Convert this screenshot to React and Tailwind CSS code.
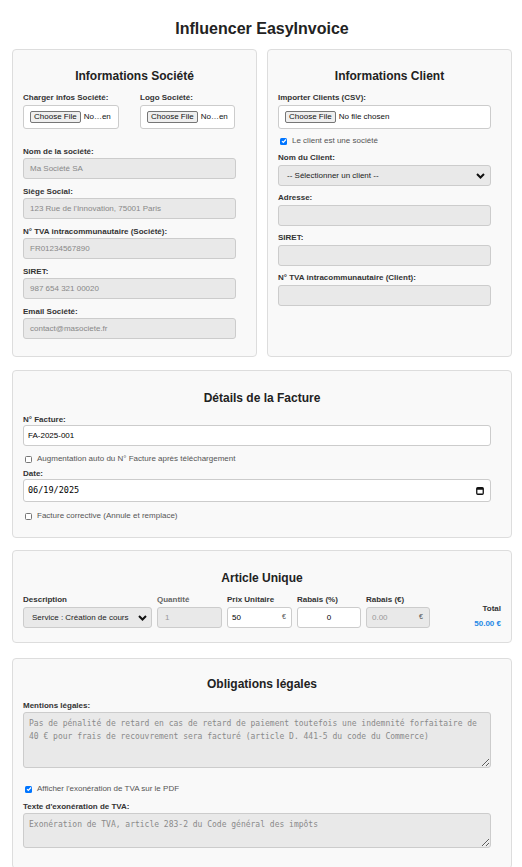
import React from 'react';

const Label = ({ children, className = 'mb-[1px]' }) => (
    <div className={`text-[8px] font-bold leading-[10px] text-[#333] ${className}`}>{children}</div>
);

const Field = ({ label, value, className = 'mb-[8px]', labelClass }) => (
    <div>
        <Label className={labelClass}>{label}</Label>
        <div className={`w-[calc(100%-10px)] h-[21px] border border-[#ccc] rounded-[3px] bg-[#e9e9e9] flex items-center px-[6px] text-[8px] text-[#888] ${className}`}>
            {value}
        </div>
    </div>
);

const Chevron = () => (
    <svg width="9" height="6" viewBox="0 0 9 6" className="shrink-0">
        <path d="M1 1l3.5 3.5L8 1" fill="none" stroke="#111" strokeWidth="2" />
    </svg>
);

const Check = ({ checked }) => (
    checked ? (
        <span className="w-[7px] h-[7px] rounded-[1.5px] bg-[#0075ff] flex items-center justify-center shrink-0">
            <svg width="6" height="6" viewBox="0 0 6 6">
                <path d="M1 3.2l1.3 1.3L5 1.5" fill="none" stroke="#fff" strokeWidth="1.2" />
            </svg>
        </span>
    ) : (
        <span className="w-[7px] h-[7px] rounded-[1.5px] border border-[#767676] bg-white shrink-0" />
    )
);

const CheckRow = ({ checked, children, className = '' }) => (
    <div className={`h-[10px] flex items-center gap-[5px] pl-[2px] text-[8px] text-[#555] ${className}`}>
        <Check checked={checked} />
        <span>{children}</span>
    </div>
);

const FileBox = ({ text, className = 'w-[96px]' }) => (
    <div className={`h-[24px] border border-[#ccc] rounded-[3px] bg-white flex items-center px-[6px] text-[8px] text-[#111] ${className}`}>
        <span className="h-[12px] leading-[10px] px-[3px] border border-[#767676] rounded-[2px] bg-[#efefef]">Choose File</span>
        <span className="ml-[3px]">{text}</span>
    </div>
);

const Card = ({ title, children, className = '' }) => (
    <section className={`bg-[#f9f9f9] border border-[#ddd] rounded-[4px] px-[10px] ${className}`}>
        <h2 className="text-[12px] leading-[14px] font-bold text-center text-[#222] mb-[10px]">{title}</h2>
        {children}
    </section>
);

const Textarea = ({ value, className }) => (
    <textarea
        readOnly
        wrap="off"
        value={value}
        className={`block w-[calc(100%-10px)] border border-[#ccc] rounded-[3px] bg-[#e9e9e9] px-[5px] pt-[4px] font-['DejaVu_Sans_Mono',monospace] text-[8px] leading-[13px] text-[#8a8a8a] overflow-hidden outline-none ${className}`}
    />
);

export default function App() {
    return (
        <div className="min-h-screen bg-white pl-3 pr-[10px] pt-[19px] pb-6 font-['Liberation_Sans',Arial,sans-serif] text-[#333]">
            <h1 className="text-[16px] leading-[20px] font-bold text-center text-[#222] mb-[10px]">Influencer EasyInvoice</h1>

            {/* Société / Client */}
            <div className="grid grid-cols-2 gap-[10px]">
                <Card title="Informations Société" className="pt-[19px] pb-[9px]">
                    <div className="flex gap-[21px] mb-[18px]">
                        <div>
                            <Label className="mb-[2px]">Charger infos Société:</Label>
                            <FileBox text="No…en" />
                        </div>
                        <div>
                            <Label className="mb-[2px]">Logo Société:</Label>
                            <FileBox text="No…en" className="w-[95px]" />
                        </div>
                    </div>
                    <Field label="Nom de la société:" value="Ma Société SA" />
                    <Field label="Siège Social:" value="123 Rue de l'Innovation, 75001 Paris" />
                    <Field label="N° TVA intracommunautaire (Société):" value="FR01234567890" />
                    <Field label="SIRET:" value="987 654 321 00020" />
                    <Field label="Email Société:" value="contact@masociete.fr" />
                </Card>

                <Card title="Informations Client" className="pt-[19px]">
                    <Label className="mb-[2px]">Importer Clients (CSV):</Label>
                    <FileBox text="No file chosen" className="w-[calc(100%-10px)] mb-[7px]" />
                    <CheckRow checked className="mb-[7px]">Le client est une société</CheckRow>
                    <Label className="mb-[2px]">Nom du Client:</Label>
                    <div className="w-[calc(100%-10px)] h-[21px] border border-[#ccc] rounded-[3px] bg-[#e9e9e9] flex items-center justify-between pl-[8px] pr-[5px] text-[8px] text-[#222] mb-[7px]">
                        <span>-- Sélectionner un client --</span>
                        <Chevron />
                    </div>
                    <Field label="Adresse:" value="" labelClass="mb-[2px]" className="mb-[7px]" />
                    <Field label="SIRET:" value="" labelClass="mb-[2px]" className="mb-[7px]" />
                    <Field label="N° TVA intracommunautaire (Client):" value="" labelClass="mb-[2px]" className="mb-[7px]" />
                </Card>
            </div>

            {/* Détails */}
            <Card title="Détails de la Facture" className="mt-[13px] pt-[20px] pb-[16px]">
                <Label className="mb-0">N° Facture:</Label>
                <div className="w-[calc(100%-10px)] h-[21px] border border-[#ccc] rounded-[3px] bg-white flex items-center px-[4px] text-[8px] text-[#000] mb-[8px]">
                    FA-2025-001
                </div>
                <CheckRow className="mb-[5px]">Augmentation auto du N° Facture après téléchargement</CheckRow>
                <Label className="mb-0">Date:</Label>
                <div className="w-[calc(100%-10px)] h-[23px] border border-[#ccc] rounded-[3px] bg-white flex items-center justify-between pl-[4px] pr-[6px] mb-[9px]">
                    <span className="font-['DejaVu_Sans_Mono',monospace] text-[8.5px] text-[#000]">06/19/2025</span>
                    <svg width="8" height="8" viewBox="0 0 8 8">
                        <rect x="0.75" y="0.75" width="6.5" height="6.5" rx="1" fill="none" stroke="#111" strokeWidth="1.3" />
                        <rect x="0.75" y="0.75" width="6.5" height="2" fill="#111" />
                    </svg>
                </div>
                <CheckRow>Facture corrective (Annule et remplace)</CheckRow>
            </Card>

            {/* Article */}
            <Card title="Article Unique" className="mt-[12px] pt-[20px] pb-[13px]">
                <div className="flex gap-[5px]">
                    <div className="w-[129px]">
                        <Label className="mb-[2px]">Description</Label>
                        <div className="h-[21px] border border-[#ccc] rounded-[3px] bg-[#e9e9e9] flex items-center justify-between pl-[8px] pr-[4px] text-[8px] text-[#222]">
                            <span>Service : Création de cours</span>
                            <Chevron />
                        </div>
                    </div>
                    <div className="w-[65px]">
                        <Label className="mb-[2px] text-[#666]">Quantité</Label>
                        <div className="h-[21px] border border-[#ccc] rounded-[3px] bg-[#e9e9e9] flex items-center px-[7px] text-[8px] text-[#999]">1</div>
                    </div>
                    <div className="w-[65px]">
                        <Label className="mb-[2px]">Prix Unitaire</Label>
                        <div className="h-[21px] border border-[#ccc] rounded-[3px] bg-white flex items-center justify-between pl-[4px] pr-[5px] text-[8px] text-[#000]">
                            <span>50</span>
                            <span className="text-[7px] text-[#555]">€</span>
                        </div>
                    </div>
                    <div className="w-[64px]">
                        <Label className="mb-[2px]">Rabais (%)</Label>
                        <div className="h-[21px] border border-[#ccc] rounded-[3px] bg-white flex items-center justify-center text-[8px] text-[#000]">0</div>
                    </div>
                    <div className="w-[64px]">
                        <Label className="mb-[2px]">Rabais (€)</Label>
                        <div className="h-[21px] border border-[#ccc] rounded-[3px] bg-[#e9e9e9] flex items-center justify-between pl-[5px] pr-[6px] text-[8px] text-[#999]">
                            <span>0.00</span>
                            <span className="text-[7px] text-[#555]">€</span>
                        </div>
                    </div>
                    <div className="flex-1 flex flex-col items-end pt-[9px] gap-[5px] text-[8px] leading-[10px] font-bold">
                        <span className="text-[#333]">Total</span>
                        <span className="text-[#1e88e5]">50.00 €</span>
                    </div>
                </div>
            </Card>

            {/* Obligations */}
            <Card title="Obligations légales" className="mt-[15px] pt-[18px] pb-[20px]">
                <Label>Mentions légales:</Label>
                <Textarea
                    className="h-[56px] mb-[16px]"
                    value={"Pas de pénalité de retard en cas de retard de paiement toutefois une indemnité forfaitaire de\n40 € pour frais de recouvrement sera facturé (article D. 441-5 du code du Commerce)"}
                />
                <CheckRow checked className="mb-[8px]">Afficher l'exonération de TVA sur le PDF</CheckRow>
                <Label>Texte d'exonération de TVA:</Label>
                <Textarea className="h-[35px]" value="Exonération de TVA, article 283-2 du Code général des impôts" />
            </Card>
        </div>
    );
}
